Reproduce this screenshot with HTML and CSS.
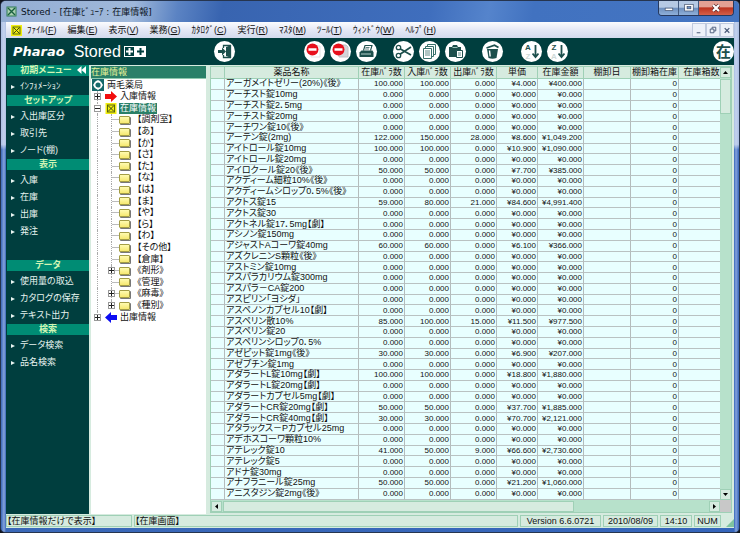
FILE: index.html
```html
<!DOCTYPE html>
<html lang="ja">
<head>
<meta charset="utf-8">
<title>Stored - [在庫ﾋﾞｭｰｱ : 在庫情報]</title>
<link rel="stylesheet" href="styles.css">
</head>
<body>
<div class="window">
  <header class="titlebar">
    <svg class="app-icon" viewBox="0 0 11 11"><rect x="1" y="1" width="9" height="9" fill="#a9cfb0" stroke="#2f7d55"/><path d="M2 2l7 7M9 2l-7 7" stroke="#17603d" stroke-width="1.4"/></svg>
    <h1 class="title">Stored - [在庫ﾋﾞｭｰｱ : 在庫情報]</h1>
    <div class="caption">
      <button class="cap" aria-label="最小化"><svg viewBox="0 0 20 14"><rect x="6.500" y="7.500" width="8" height="2.500" fill="#fff" stroke="#3c4a66" stroke-width=".7"/></svg></button>
      <button class="cap" aria-label="最大化"><svg viewBox="0 0 20 14"><rect x="6" y="3.500" width="9" height="7" fill="#fff" stroke="#3c4a66" stroke-width=".7"/><rect x="8.500" y="5.800" width="4" height="2.400" fill="#6f93c6" stroke="#3c4a66" stroke-width=".7"/></svg></button>
      <button class="cap cap-close" aria-label="閉じる"><svg viewBox="0 0 34 14"><path d="M14 4l6 6M20 4l-6 6" stroke="#5b2a28" stroke-width="3.400"/><path d="M14 4l6 6M20 4l-6 6" stroke="#fff" stroke-width="2.200"/></svg></button>
    </div>
  </header>

  <div class="frame">
    <nav class="menubar">
      <svg class="doc-icon" viewBox="0 0 11 11"><rect width="11" height="11" fill="#f2ee10"/><rect x="2" y="2" width="7" height="7" fill="none" stroke="#5c6a10"/><path d="M2.500 2.500l6 6M8.500 2.500l-6 6" stroke="#3c4a10"/></svg>
      <button class="menu">ﾌｧｲﾙ(<u>F</u>)</button>
      <button class="menu">編集(<u>E</u>)</button>
      <button class="menu">表示(<u>V</u>)</button>
      <button class="menu">業務(<u>G</u>)</button>
      <button class="menu">ｶﾀﾛｸﾞ(<u>C</u>)</button>
      <button class="menu">実行(<u>R</u>)</button>
      <button class="menu">ﾏｽﾀ(<u>M</u>)</button>
      <button class="menu">ﾂｰﾙ(<u>T</u>)</button>
      <button class="menu">ｳｨﾝﾄﾞｳ(<u>W</u>)</button>
      <button class="menu">ﾍﾙﾌﾟ(<u>H</u>)</button>
      <div class="mdi">
        <button class="mdi-btn" aria-label="子ウィンドウを最小化"><svg viewBox="0 0 13 13"><path d="M4 9.500h4" stroke="#4a5a78" stroke-width="1.300"/></svg></button>
        <button class="mdi-btn" aria-label="元のサイズに戻す"><svg viewBox="0 0 13 13"><path d="M5.500 5.500v-2h4v4h-2M3.500 5.500h4v4h-4z" fill="none" stroke="#4a5a78"/></svg></button>
        <button class="mdi-btn" aria-label="子ウィンドウを閉じる"><svg viewBox="0 0 13 13"><path d="M4 4.500l5 5M9 4.500l-5 5" stroke="#4a5a78" stroke-width="1.300"/></svg></button>
      </div>
    </nav>

    <div class="toolbar">
      <div class="brand">
        <span class="brand-maker">Pharao</span>
        <span class="brand-product">Stored</span>
        <svg class="brand-mark" viewBox="0 0 22 11"><rect x=".5" y=".5" width="10" height="10" fill="none" stroke="#fff"/><path d="M5.500 2v7M2 5.500h7" stroke="#fff" stroke-width="2"/><rect x="11" width="11" height="11" fill="#fff"/><path d="M16.500 2v7M13 5.500h7" stroke="#003e3e" stroke-width="2"/></svg>
      </div>
      <div class="tools">
        <button class="tool" aria-label="終了"><svg viewBox="0 0 21 21"><path d="M9.500 7V4.500h7v12h-7V14" fill="none" stroke="#1d4f4c" stroke-width="1.300"/><path d="M12 6l4-1.500v12L12 15z" fill="#1d4f4c"/><path d="M4 9h4V6.500l4 4-4 4V12H4z" fill="#1d4f4c"/></svg></button>
      </div>
      <div class="tools">
        <button class="tool" aria-label="削除"><svg viewBox="0 0 21 21"><path d="M7 5h9v11H7z" fill="#fff" stroke="#e2e2e2"/><circle cx="8.500" cy="8.500" r="6" fill="#e8101c"/><path d="M4.500 8.500h8" stroke="#fff" stroke-width="2.400"/></svg></button>
        <button class="tool" aria-label="一括削除"><svg viewBox="0 0 21 21"><path d="M8 4h8l2 2v10h-9z" fill="#d5d5d8" stroke="#bfc3c5"/><circle cx="8.500" cy="8.500" r="6" fill="#e8101c"/><path d="M4.500 8.500h8" stroke="#fff" stroke-width="2.400"/></svg></button>
        <button class="tool" aria-label="印刷"><svg viewBox="0 0 21 21"><path d="M7.500 9.500l1.500-5h7l-1.500 5" fill="#fff" stroke="#1d4f4c" stroke-width="1.100"/><path d="M9.500 6.500h4M9 8h4" stroke="#1d4f4c" stroke-width=".7"/><path d="M5.500 9.500h11l1 2v4.500h-14v-4.500z" fill="#1d4f4c"/><path d="M5 13h10" stroke="#b5d3cc"/></svg></button>
      </div>
      <div class="tools">
        <button class="tool" aria-label="切り取り"><svg viewBox="0 0 21 21"><path d="M7 7.800L18 14M7 13.200L18 6" stroke="#1d4f4c" stroke-width="1.700"/><circle cx="5.500" cy="6.500" r="2.200" fill="none" stroke="#1d4f4c" stroke-width="1.300"/><circle cx="5.500" cy="14.500" r="2.200" fill="none" stroke="#1d4f4c" stroke-width="1.300"/></svg></button>
        <button class="tool" aria-label="コピー"><svg viewBox="0 0 21 21"><g fill="#fff" stroke="#37706a"><path d="M8.500 3.500h8v10h-8z"/><path d="M6.500 5.500h8v10h-8z"/><path d="M4.500 7.500h8v10h-8z"/></g><path d="M6 10h5M6 12h5M6 14h5" stroke="#37706a" stroke-width=".8"/></svg></button>
        <button class="tool" aria-label="貼り付け"><svg viewBox="0 0 21 21"><path d="M4 6h3l1-2h4l1 2h3v10H4z" fill="#1d4f4c"/><path d="M7.500 6.500h5" stroke="#9cc4bb"/><path d="M11.500 9.500h6v7h-6z" fill="#fff" stroke="#1d4f4c"/><path d="M13 12h3M13 14h3" stroke="#37706a" stroke-width=".8"/></svg></button>
      </div>
      <div class="tools">
        <button class="tool" aria-label="ごみ箱"><svg viewBox="0 0 21 21"><path d="M5 8h11l-1.500 9q-4 1.500-8 0z" fill="#1d4f4c"/><path d="M4.500 7l8-2.800 4 2.300" fill="none" stroke="#1d4f4c" stroke-width="1.800"/><path d="M7.500 9.500l.7 6" stroke="#fff" stroke-width="1.400"/></svg></button>
      </div>
      <div class="tools tools-sort">
        <button class="tool sort" aria-label="昇順"><span class="sort-top">A</span><span class="sort-low">Z</span><svg viewBox="0 0 7 14"><path d="M3.500 0v11M.5 8.500l3 3.500 3-3.500" fill="none" stroke="#1d4f4c" stroke-width="1.800"/></svg></button>
        <button class="tool sort" aria-label="降順"><span class="sort-top">Z</span><span class="sort-low">A</span><svg viewBox="0 0 7 14"><path d="M3.500 0v11M.5 8.500l3 3.500 3-3.500" fill="none" stroke="#1d4f4c" stroke-width="1.800"/></svg></button>
      </div>
      <button class="tool tool-zai" aria-label="在庫">在</button>
    </div>

    <div class="workspace">
      <nav class="sidebar">
        <section>
          <h2 class="side-head side-first">初期メニュー<button class="collapse" aria-label="メニューを隠す"><svg viewBox="0 0 9 8"><path d="M4.500 0v8L0 4zM9 0v8L4.500 4z" fill="#fff"/></svg></button></h2>
          <ul class="side-list"><li><a href="#">ｲﾝﾌｫﾒｰｼｮﾝ</a></li></ul>
        </section>
        <section>
          <h2 class="side-head">セットアップ</h2>
          <ul class="side-list"><li><a href="#">入出庫区分</a></li><li><a href="#">取引先</a></li><li><a href="#">ノード(棚)</a></li></ul>
        </section>
        <section class="side-views">
          <h2 class="side-head">表示</h2>
          <ul class="side-list"><li><a href="#">入庫</a></li><li><a href="#">在庫</a></li><li><a href="#">出庫</a></li><li><a href="#">発注</a></li></ul>
        </section>
        <section>
          <h2 class="side-head">データ</h2>
          <ul class="side-list"><li><a href="#">使用量の取込</a></li><li><a href="#">カタログの保存</a></li><li><a href="#">テキスト出力</a></li></ul>
        </section>
        <section>
          <h2 class="side-head">検索</h2>
          <ul class="side-list"><li><a href="#">データ検索</a></li><li><a href="#">品名検索</a></li></ul>
        </section>
      </nav>

      <section class="tree-pane">
        <h2 class="tree-title">在庫情報</h2>
        <div class="tree-body">
          <ul class="tree">
            <li class="node root"><svg class="root-icon" viewBox="0 0 12 12"><rect width="12" height="12" fill="#15696a"/><circle cx="6" cy="6" r="3.500" fill="none" stroke="#fff" stroke-width="1.800"/><path d="M6 1v2M6 9v2M1 6h2M9 6h2" stroke="#fff"/></svg><span class="label">両毛薬局</span></li>
            <li class="node top"><button class="toggle" aria-label="展開"><svg viewBox="0 0 5 5"><path d="M0 2.500h5M2.500 0v5" stroke="#222"/></svg></button><svg class="icon" viewBox="0 0 12 11"><path d="M0 3h6V0l6 5.500L6 11V8H0z" fill="#f20d0d"/></svg><span class="label">入庫情報</span></li>
            <li class="node top"><button class="toggle" aria-label="折りたたむ"><svg viewBox="0 0 5 5"><path d="M0 2.500h5" stroke="#222"/></svg></button><svg class="icon" viewBox="0 0 11 11"><rect width="11" height="11" fill="#f2ee10"/><rect x="2" y="2" width="7" height="7" fill="none" stroke="#5c6a10"/><path d="M2.500 2.500l6 6M8.500 2.500l-6 6" stroke="#3c4a10"/></svg><span class="label selected">在庫情報</span></li>
            <li class="node leaf"><i class="folder"></i><span class="label">【調剤室】</span></li>
            <li class="node leaf"><i class="folder"></i><span class="label">【あ】</span></li>
            <li class="node leaf"><i class="folder"></i><span class="label">【か】</span></li>
            <li class="node leaf"><i class="folder"></i><span class="label">【さ】</span></li>
            <li class="node leaf"><i class="folder"></i><span class="label">【た】</span></li>
            <li class="node leaf"><i class="folder"></i><span class="label">【な】</span></li>
            <li class="node leaf"><i class="folder"></i><span class="label">【は】</span></li>
            <li class="node leaf"><i class="folder"></i><span class="label">【ま】</span></li>
            <li class="node leaf"><i class="folder"></i><span class="label">【や】</span></li>
            <li class="node leaf"><i class="folder"></i><span class="label">【ら】</span></li>
            <li class="node leaf"><i class="folder"></i><span class="label">【わ】</span></li>
            <li class="node leaf"><i class="folder"></i><span class="label">【その他】</span></li>
            <li class="node leaf"><i class="folder"></i><span class="label">【倉庫】</span></li>
            <li class="node leaf"><button class="toggle" aria-label="展開"><svg viewBox="0 0 5 5"><path d="M0 2.500h5M2.500 0v5" stroke="#222"/></svg></button><i class="folder"></i><span class="label">《剤形》</span></li>
            <li class="node leaf"><i class="folder"></i><span class="label">《管理》</span></li>
            <li class="node leaf"><button class="toggle" aria-label="展開"><svg viewBox="0 0 5 5"><path d="M0 2.500h5M2.500 0v5" stroke="#222"/></svg></button><i class="folder"></i><span class="label">《麻毒》</span></li>
            <li class="node leaf last"><button class="toggle" aria-label="展開"><svg viewBox="0 0 5 5"><path d="M0 2.500h5M2.500 0v5" stroke="#222"/></svg></button><i class="folder"></i><span class="label">《種別》</span></li>
            <li class="node top end"><button class="toggle" aria-label="展開"><svg viewBox="0 0 5 5"><path d="M0 2.500h5M2.500 0v5" stroke="#222"/></svg></button><svg class="icon" viewBox="0 0 12 11"><path d="M12 3H6V0L0 5.500 6 11V8h6z" fill="#0d0df2"/></svg><span class="label">出庫情報</span></li>
          </ul>
        </div>
      </section>

      <main class="grid-pane">
        <div class="grid-view">
          <table class="stock">
            <colgroup><col class="c-mark"><col class="c-name"><col class="c-num"><col class="c-num"><col class="c-num"><col class="c-price"><col class="c-num"><col class="c-date"><col class="c-box"><col class="c-price"></colgroup>
            <thead><tr><th></th><th>薬品名称</th><th>在庫ﾊﾞﾗ数</th><th>入庫ﾊﾞﾗ数</th><th>出庫ﾊﾞﾗ数</th><th>単価</th><th>在庫金額</th><th>棚卸日</th><th>棚卸箱在庫</th><th>在庫箱数</th></tr></thead>
            <tbody id="rows"></tbody>
          </table>
        </div>
        <div class="vbar">
          <button class="bar-btn" aria-label="上へ"><svg viewBox="0 0 5 3"><path d="M0 3h5L2.500 0z"/></svg></button>
          <div class="vthumb"></div>
          <button class="bar-btn" aria-label="下へ"><svg viewBox="0 0 5 3"><path d="M0 0h5L2.500 3z"/></svg></button>
        </div>
        <div class="hbar">
          <button class="bar-btn" aria-label="左へ"><svg viewBox="0 0 3 5"><path d="M3 0v5L0 2.500z"/></svg></button>
          <div class="hthumb"></div>
          <button class="bar-btn" aria-label="右へ"><svg viewBox="0 0 3 5"><path d="M0 0v5l3-2.500z"/></svg></button>
        </div>
        <div class="corner"></div>
      </main>
    </div>

    <footer class="status">
      <span class="cell cell-scope">【在庫情報だけで表示】</span>
      <span class="cell cell-screen">【在庫画面】</span>
      <span class="cell cell-version">Version 6.6.0721</span>
      <span class="cell cell-date">2010/08/09</span>
      <span class="cell cell-time">14:10</span>
      <span class="cell cell-num">NUM</span>
      <svg class="grip" viewBox="0 0 8 8"><path d="M8 0v8H0z" fill="#7fc3a0"/></svg>
    </footer>
  </div>
</div>
<script src="rows.js"></script>
</body>
</html>
```
FILE: styles.css
```css
* { box-sizing: border-box; margin: 0; padding: 0; }

:root {
  --deep: #003e3e;
  --band: #008c74;
  --pale: #d6ebdf;
  --mint: #b7e1cb;
  --edge: #9fd0b6;
  --cell: #e8ffff;
}

body {
  background: #10141c;
  font-family: "Liberation Sans", "Noto Sans CJK JP", sans-serif;
  font-size: 9px;
  font-feature-settings: "palt";
  color: #111;
}

button { border: 0; background: none; font: inherit; color: inherit; font-feature-settings: inherit; }
ul { list-style: none; }
svg { display: block; }

.window {
  display: flex;
  flex-direction: column;
  height: 100vh;
  padding: 0 5px 4px;
  border: 1px solid #26354f;
  border-radius: 6px 6px 5px 5px;
  background:
    linear-gradient(rgba(222, 230, 246, .7) 27%, transparent 28%),
    linear-gradient(to right, #3a68b8, #86a4dc 3px, #3a68b8 5px, #3565bb calc(100% - 5px), #86a4dc calc(100% - 3px), #3463b8);
  overflow: hidden;
}

/* Title bar */
.titlebar {
  flex: none;
  display: flex;
  align-items: center;
  height: 21px;
  margin: 0 -5px;
  padding: 0 5px;
  background: linear-gradient(100deg, #94aed3 0, #9fb8da 18%, #5b83c3 24%, #3864b0 30%, #3f6ebd 58%, #5584cc 66%, #4172c0 72%, #4475c2 100%);
}
.app-icon { width: 11px; height: 11px; }
.title { margin-left: 4px; font-family: "DejaVu Sans", "Noto Sans CJK JP", sans-serif; font-size: 9px; font-weight: 400; white-space: nowrap; color: #0a1222; }
.caption { display: flex; align-self: flex-start; margin-left: auto; border: 1px solid #26395e; border-top: 0; border-radius: 0 0 4px 4px; overflow: hidden; }
.cap { width: 20px; height: 14px; border-right: 1px solid #41597f; background: linear-gradient(#b5c9e4 45%, #6d8fbe 50%, #8fb0da); }
.cap-close { width: 34px; border-right: 0; background: linear-gradient(#e3a093 40%, #bd3420 50%, #d3604a); }

/* Client area */
.frame { flex: 1; display: flex; flex-direction: column; min-height: 0; background: var(--pale); }

.menubar {
  flex: none;
  display: flex;
  align-items: center;
  gap: 11px;
  height: 16px;
  padding-left: 5px;
  background: linear-gradient(#fbfcfe, #e4e8f5 50%, #d3daed);
}
.doc-icon { width: 11px; height: 11px; margin-right: -6px; }
.menu { white-space: nowrap; line-height: 14px; }
.mdi { display: flex; margin-left: auto; }
.mdi-btn { width: 14px; height: 14px; border: 1px solid #c0cade; background: #edf1f9; }

.toolbar { flex: none; display: flex; align-items: center; gap: 16px; height: 27px; padding-left: 7px; background: var(--deep); color: #fff; overflow: hidden; }
.brand { display: flex; align-items: center; gap: 3px; width: 185px; }
.brand-maker { font: italic 700 13px/20px "DejaVu Sans", sans-serif; margin-right: 6px; }
.brand-product { font: 400 16px/20px "Liberation Sans", sans-serif; }
.brand-mark { width: 22px; height: 11px; }
.tools { display: flex; gap: 5px; }
.brand + .tools { margin-right: 53px; }
.tool { display: block; flex: none; width: 21px; height: 21px; border-radius: 50%; background: #fff; color: #1d4f4c; overflow: hidden; }
.tools-sort { margin-left: 2px; }
.sort { display: grid; grid-template: 9px 9px / 8px 7px; place-content: center; place-items: center; font: 700 8px/9px "Liberation Sans", sans-serif; }
.sort svg { grid-area: 1 / 2 / 3 / 3; width: 7px; height: 14px; }
.sort-low { grid-area: 2 / 1; color: #cfdad8; }
.tool-zai { margin-left: auto; font-size: 15px; font-weight: 700; line-height: 20px; }

.workspace { flex: 1; display: flex; min-height: 0; }

/* Sidebar */
.sidebar { flex: none; width: 83px; padding-left: 1px; background: var(--deep); color: #e8f4f0; }
.side-head { display: flex; align-items: center; justify-content: center; position: relative; height: 11px; line-height: 11px; font-size: 9px; font-weight: 700; color: #d2f5b4; background: var(--band); }
.side-first { padding-right: 4px; }
.collapse { position: absolute; right: 3px; top: 1px; width: 9px; }
.side-list { padding-top: 2px; }
.side-list li { height: 17px; line-height: 17px; }
.side-list a { display: flex; align-items: center; gap: 5px; padding-left: 4px; color: inherit; text-decoration: none; white-space: nowrap; }
.side-list a::before { content: ""; border: 2px solid transparent; border-left: 4px solid #e8f4f0; border-right: 0; }
.side-views { padding-bottom: 20px; }

/* Tree */
.tree-pane { flex: none; display: flex; flex-direction: column; width: 117px; padding: 1px 0 0 2px; }
.tree-title { height: 13px; line-height: 12px; font-size: 9px; font-weight: 400; color: #e6f39a; background: #2a8068; border-bottom: 1px solid #8fc9ae; }
.tree-body { flex: 1; background: #fff; }
.tree { display: grid; grid-auto-rows: 1fr; height: 244px; }
.node { position: relative; display: flex; align-items: center; white-space: nowrap; }
.node:not(.root)::before { content: ""; position: absolute; left: 6px; top: 0; bottom: 0; border-left: 1px dotted #aaa; }
.node.end::before { bottom: 50%; }
.leaf::after { content: ""; position: absolute; left: 20px; top: 0; bottom: 0; width: 8px; border-left: 1px dotted #aaa; background: linear-gradient(#bbb, #bbb) center / 100% 1px no-repeat; }
.leaf.last::after { bottom: 50%; background: none; }
.root-icon { width: 12px; height: 12px; margin-left: 1px; }
.root .label { margin-left: 2px; }
.icon { flex: none; width: 12px; height: 11px; margin-left: 4px; }
.toggle { position: relative; z-index: 1; width: 7px; height: 7px; border: 1px solid #999; background: #fff; }
.top { padding-left: 3px; }
.label { padding: 0 1px; margin-left: 2px; line-height: 11px; }
.selected { background: #2a8068; color: #fff; }
.folder { position: relative; z-index: 1; flex: none; width: 11px; height: 8px; border: 1px solid #a39d45; border-radius: 1px; background: linear-gradient(#fffbb0, #f6e870); box-shadow: 1px 1px 0 #777; }
.leaf { padding-left: 21px; }
.leaf .folder { margin-left: 7px; }
.leaf .toggle { margin: 0 -3px 0 -4px; }
.leaf .label { margin-left: 6px; }

/* Stock grid */
.grid-pane {
  flex: 1;
  display: grid;
  grid-template: minmax(0, 1fr) 12px / minmax(0, 1fr) 11px;
  min-width: 0;
  margin: 1px 2px 1px 4px;
  border: 1px solid var(--edge);
}
.grid-view { overflow: hidden; background: var(--cell); }
.stock { width: 100%; height: 100%; table-layout: fixed; border-collapse: separate; border-spacing: 0; }
.c-mark { width: 14px; }
.c-num { width: 46px; }
.c-price { width: 41px; }
.c-date { width: 47px; }
.c-box { width: 48px; }
.stock th, .stock td { border-right: 1px solid #b4bcbc; border-bottom: 1px solid #b9c2c2; line-height: 9px; white-space: nowrap; }
.stock th { height: 12px; font-weight: 400; background: var(--pale); border-color: var(--edge); }
.stock th:last-child { padding-left: 4px; }
.stock td { text-align: right; padding-right: 1px; font-size: 8px; }
.stock .name { text-align: left; padding-left: 1px; font-size: 9px; }
.stock tr > :last-child { border-right: 0; }

.bar-btn { display: flex; align-items: center; justify-content: center; flex: none; width: 11px; height: 11px; border: 1px solid var(--edge); background: var(--pale); }
.bar-btn svg { width: 5px; height: 5px; }
.vbar { display: flex; flex-direction: column; background: var(--mint); }
.vthumb { height: 35px; margin: 1px 0 auto; border: 1px solid var(--edge); background: var(--pale); }
.hbar { display: flex; padding-top: 1px; background: var(--mint); }
.hthumb { width: 69%; margin: 0 auto 0 1px; border: 1px solid var(--edge); background: var(--pale); }
.corner { background: #c8c8c8; }

/* Status bar */
.status { flex: none; display: flex; gap: 2px; height: 14px; padding: 1px 0; font-size: 9px; }
.cell { border: 1px solid var(--edge); line-height: 10px; white-space: nowrap; text-align: center; }
.cell-scope, .cell-screen { text-align: left; }
.cell-scope { width: 126px; }
.cell-screen { flex: 1; }
.cell-version { width: 81px; }
.cell-date { width: 55px; }
.cell-time { width: 32px; }
.cell-num { width: 27px; }
.grip { width: 8px; height: 8px; align-self: flex-end; margin-left: 3px; }
```
FILE: rows.js
```js
const zero = ["0.000", "0.000", "0.000", "¥0.000", "¥0.000"];

const items = [
  ["アーガメイトゼリー(20%)《後》", "100.000", "100.000", "0.000", "¥4.000", "¥400.000"],
  ["アーチスト錠10mg"],
  ["アーチスト錠2．5mg"],
  ["アーチスト錠20mg"],
  ["アーチワン錠10《後》"],
  ["アーテン錠(2mg)", "122.000", "150.000", "28.000", "¥8.600", "¥1,049.200"],
  ["アイトロール錠10mg", "100.000", "100.000", "0.000", "¥10.900", "¥1,090.000"],
  ["アイトロール錠20mg"],
  ["アイロクール錠20《後》", "50.000", "50.000", "0.000", "¥7.700", "¥385.000"],
  ["アクディーム細粒10%《後》"],
  ["アクディームシロップ0．5%《後》"],
  ["アクトス錠15", "59.000", "80.000", "21.000", "¥84.600", "¥4,991.400"],
  ["アクトス錠30"],
  ["アクトネル錠17．5mg【劇】"],
  ["アシノン錠150mg"],
  ["アジャストAコーワ錠40mg", "60.000", "60.000", "0.000", "¥6.100", "¥366.000"],
  ["アズクレニンS顆粒《後》"],
  ["アストミン錠10mg"],
  ["アスパラカリウム錠300mg"],
  ["アスパラ－CA錠200"],
  ["アスピリン「ヨシダ」"],
  ["アスペノンカプセル10【劇】"],
  ["アスペリン散10%", "85.000", "100.000", "15.000", "¥11.500", "¥977.500"],
  ["アスペリン錠20"],
  ["アスペリンシロップ0．5%"],
  ["アゼピット錠1mg《後》", "30.000", "30.000", "0.000", "¥6.900", "¥207.000"],
  ["アゼプチン錠1mg"],
  ["アダラートL錠10mg【劇】", "100.000", "100.000", "0.000", "¥18.800", "¥1,880.000"],
  ["アダラートL錠20mg【劇】"],
  ["アダラートカプセル5mg【劇】"],
  ["アダラートCR錠20mg【劇】", "50.000", "50.000", "0.000", "¥37.700", "¥1,885.000"],
  ["アダラートCR錠40mg【劇】", "30.000", "30.000", "0.000", "¥70.700", "¥2,121.000"],
  ["アタラックス－Pカプセル25mg"],
  ["アデホスコーワ顆粒10%"],
  ["アテレック錠10", "41.000", "50.000", "9.000", "¥66.600", "¥2,730.600"],
  ["アテレック錠5"],
  ["アドナ錠30mg"],
  ["アナフラニール錠25mg", "50.000", "50.000", "0.000", "¥21.200", "¥1,060.000"],
  ["アニスタジン錠2mg《後》"],
];

const body = document.getElementById("rows");
for (const [name, ...values] of items) {
  const row = body.insertRow();
  row.insertCell();
  const nameCell = row.insertCell();
  nameCell.className = "name";
  nameCell.textContent = name;
  const figures = values.length ? values : zero;
  for (const text of [...figures, "", "0", ""]) {
    row.insertCell().textContent = text;
  }
}
```
